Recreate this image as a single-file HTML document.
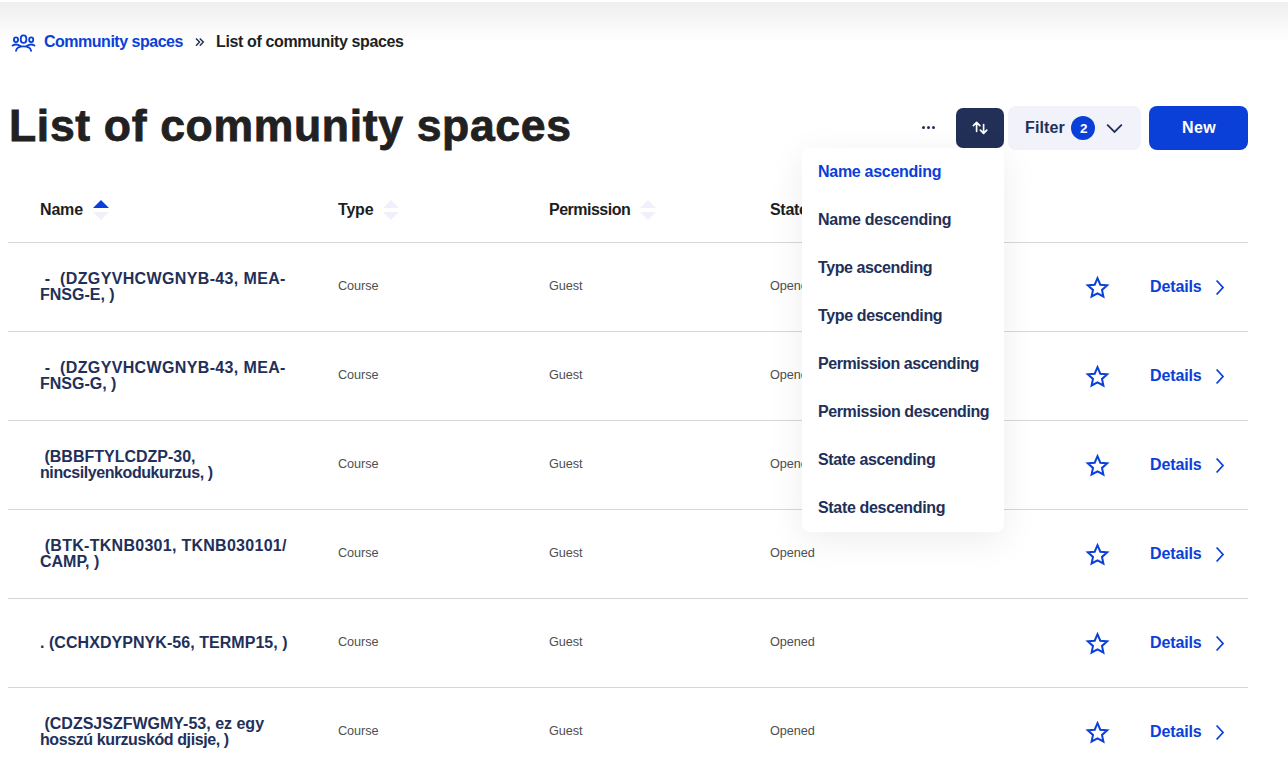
<!DOCTYPE html>
<html>
<head>
<meta charset="utf-8">
<style>
html,body{margin:0;padding:0;background:#fff;width:1288px;height:774px;overflow:hidden;}
body{position:relative;font-family:"Liberation Sans",sans-serif;font-weight:700;}
.a{position:absolute;white-space:nowrap;}
.topshade{position:absolute;left:0;top:2px;width:1288px;height:40px;background:linear-gradient(#efefef,#fff);}
.bc{font-size:16px;line-height:16px;}
.blue{color:#0b40d8;}
.navy{color:#223059;}
h1{margin:0;position:absolute;left:9px;top:98px;font-size:44.5px;letter-spacing:0.67px;-webkit-text-stroke:0.8px #212121;line-height:56px;color:#212121;font-weight:700;white-space:nowrap;}
.btn-sort{position:absolute;left:956px;top:108px;width:48px;height:40px;border-radius:7px;background:#222f56;}
.btn-filter{position:absolute;left:1008px;top:106px;width:133px;height:44px;border-radius:8px;background:#f1f2fa;}
.btn-new{position:absolute;left:1149px;top:106px;width:99px;height:44px;border-radius:8px;background:#0b40d8;}
.badge{position:absolute;left:1071px;top:116px;width:24px;height:24px;border-radius:12px;background:#0b40d8;color:#fff;font-size:13.5px;line-height:25.6px;text-align:center;text-indent:1.6px;}
.th{font-size:16px;line-height:16px;color:#1e1e1e;}
.line{position:absolute;left:8px;width:1240px;height:1px;background:#d6d6d6;}
.nm{font-size:16px;line-height:16px;color:#223059;}
.val{font-size:12.7px;letter-spacing:-0.08px;line-height:14px;color:#4f4f4f;font-weight:400;}
.det{font-size:16px;letter-spacing:-0.12px;line-height:16px;color:#0b40d8;}
.dd{position:absolute;left:802px;top:148px;width:202px;height:384px;background:#fff;border-radius:8px;box-shadow:0 8px 36px rgba(0,0,0,0.075);}
.di{position:absolute;left:16px;font-size:16px;line-height:16px;color:#223059;white-space:nowrap;}
</style>
</head>
<body>
<div class="topshade"></div>

<!-- breadcrumb -->
<svg class="a" style="left:0;top:0" width="40" height="56" viewBox="0 0 40 56">
  <g fill="none" stroke="#0b40d8" stroke-width="1.85" stroke-linecap="round">
    <ellipse cx="16" cy="39.7" rx="2.05" ry="2.4"/>
    <rect x="20.8" y="35.3" width="5.5" height="7.6" rx="2.6" ry="2.9"/>
    <ellipse cx="31.2" cy="39.7" rx="2.05" ry="2.4"/>
    <path d="M12.6 45.5Q16.4 43.3 20.4 46.1"/>
    <path d="M34.5 45.5Q30.7 43.3 26.7 46.1"/>
    <path d="M16 50.8C16.5 47.6 19.5 46.4 23.55 46.4C27.6 46.4 30.6 47.6 31.1 50.8"/>
  </g>
</svg>
<div class="a bc blue" style="left:44px;top:34px;letter-spacing:-0.49px">Community spaces</div>
<svg class="a" style="left:190px;top:32px" width="20" height="18" viewBox="0 0 20 18"><g fill="none" stroke="#223059" stroke-width="1.45"><path d="M6 6.5L9.5 10.1L6 13.7"/><path d="M9.8 6.5L13.3 10.1L9.8 13.7"/></g></svg>
<div class="a bc" style="left:216px;top:34px;color:#1f1f1f;letter-spacing:-0.37px">List of community spaces</div>

<h1>List of community spaces</h1>

<!-- actions -->
<div class="a" style="left:922px;top:126px;width:14px;height:4px">
  <span style="position:absolute;left:0;top:0;width:3px;height:3px;border-radius:2px;background:#223059"></span>
  <span style="position:absolute;left:5px;top:0;width:3px;height:3px;border-radius:2px;background:#223059"></span>
  <span style="position:absolute;left:10px;top:0;width:3px;height:3px;border-radius:2px;background:#223059"></span>
</div>
<div class="btn-sort">
  <svg style="position:absolute;left:0;top:0" width="48" height="40" viewBox="0 0 48 40">
    <g fill="none" stroke="#fff" stroke-width="1.7" stroke-linecap="round" stroke-linejoin="round">
      <path d="M20.6 23.3V14.4M17.4 17.6L20.6 14.4L23.8 17.6"/>
      <path d="M27.6 16.6V25.4M24.4 22.2L27.6 25.4L30.8 22.2"/>
    </g>
  </svg>
</div>
<div class="btn-filter"></div>
<div class="a navy" style="left:1025px;top:120px;font-size:16px;line-height:16px;letter-spacing:0.12px">Filter</div>
<div class="badge">2</div>
<svg class="a" style="left:1106px;top:123px" width="18" height="11" viewBox="0 0 18 11">
  <path d="M1.2 1.6L8.5 8.9L15.8 1.6" fill="none" stroke="#223059" stroke-width="1.8"/>
</svg>
<div class="btn-new"></div>
<div class="a" style="left:1182px;top:120px;font-size:16px;line-height:16px;color:#fff;letter-spacing:0.45px">New</div>

<!-- table header -->
<div class="a th" style="left:40px;top:202px;letter-spacing:-0.17px">Name</div>
<svg class="a" style="left:93px;top:200px" width="16" height="20" viewBox="0 0 16 20">
  <path d="M0 8L8 0L16 8Z" fill="#0b40d8"/><path d="M0 12L8 20L16 12Z" fill="#eff0fa"/>
</svg>
<div class="a th" style="left:338px;top:202px;letter-spacing:-0.2px">Type</div>
<svg class="a" style="left:383px;top:200px" width="16" height="20" viewBox="0 0 16 20">
  <path d="M0 8L8 0L16 8Z" fill="#eff0fa"/><path d="M0 12L8 20L16 12Z" fill="#eff0fa"/>
</svg>
<div class="a th" style="left:549px;top:202px;letter-spacing:-0.5px">Permission</div>
<svg class="a" style="left:640px;top:200px" width="16" height="20" viewBox="0 0 16 20">
  <path d="M0 8L8 0L16 8Z" fill="#eff0fa"/><path d="M0 12L8 20L16 12Z" fill="#eff0fa"/>
</svg>
<div class="a th" style="left:770px;top:202px;letter-spacing:-0.3px">State</div>

<div class="line" style="top:242px"></div>
<div class="line" style="top:331px"></div>
<div class="line" style="top:420px"></div>
<div class="line" style="top:509px"></div>
<div class="line" style="top:598px"></div>
<div class="line" style="top:687px"></div>

<!--ROWS-->
<div class="a nm" style="left:40px;top:271px"><span style="letter-spacing:0.36px">&nbsp;-&nbsp;&nbsp;(DZGYVHCWGNYB-43, MEA-</span><br><span style="letter-spacing:0px">FNSG-E, )</span></div>
<div class="a val" style="left:338px;top:279px">Course</div>
<div class="a val" style="left:549px;top:279px">Guest</div>
<div class="a val" style="left:770px;top:279px">Opened</div>
<svg class="a" style="left:1085px;top:276px" width="25" height="24" viewBox="0 0 25 24"><path d="M12.5 2.2L15.3 8.7L22.2 9.3L17 13.9L18.4 20.5L12.5 17.3L6.6 20.5L8 13.9L2.8 9.3L9.7 8.7Z" fill="none" stroke="#0b40d8" stroke-width="2" stroke-linejoin="miter"/></svg>
<div class="a det" style="left:1150px;top:279px">Details</div>
<svg class="a" style="left:1214px;top:279px" width="12" height="17" viewBox="0 0 12 17"><path d="M2.6 1.5L9 8.5L2.6 15.5" fill="none" stroke="#0b40d8" stroke-width="1.75"/></svg>
<div class="a nm" style="left:40px;top:360px"><span style="letter-spacing:0.36px">&nbsp;-&nbsp;&nbsp;(DZGYVHCWGNYB-43, MEA-</span><br><span style="letter-spacing:0px">FNSG-G, )</span></div>
<div class="a val" style="left:338px;top:368px">Course</div>
<div class="a val" style="left:549px;top:368px">Guest</div>
<div class="a val" style="left:770px;top:368px">Opened</div>
<svg class="a" style="left:1085px;top:365px" width="25" height="24" viewBox="0 0 25 24"><path d="M12.5 2.2L15.3 8.7L22.2 9.3L17 13.9L18.4 20.5L12.5 17.3L6.6 20.5L8 13.9L2.8 9.3L9.7 8.7Z" fill="none" stroke="#0b40d8" stroke-width="2" stroke-linejoin="miter"/></svg>
<div class="a det" style="left:1150px;top:368px">Details</div>
<svg class="a" style="left:1214px;top:368px" width="12" height="17" viewBox="0 0 12 17"><path d="M2.6 1.5L9 8.5L2.6 15.5" fill="none" stroke="#0b40d8" stroke-width="1.75"/></svg>
<div class="a nm" style="left:40px;top:449px"><span style="letter-spacing:0px">&nbsp;(BBBFTYLCDZP-30,</span><br><span style="letter-spacing:-0.42px">nincsilyenkodukurzus, )</span></div>
<div class="a val" style="left:338px;top:457px">Course</div>
<div class="a val" style="left:549px;top:457px">Guest</div>
<div class="a val" style="left:770px;top:457px">Opened</div>
<svg class="a" style="left:1085px;top:454px" width="25" height="24" viewBox="0 0 25 24"><path d="M12.5 2.2L15.3 8.7L22.2 9.3L17 13.9L18.4 20.5L12.5 17.3L6.6 20.5L8 13.9L2.8 9.3L9.7 8.7Z" fill="none" stroke="#0b40d8" stroke-width="2" stroke-linejoin="miter"/></svg>
<div class="a det" style="left:1150px;top:457px">Details</div>
<svg class="a" style="left:1214px;top:457px" width="12" height="17" viewBox="0 0 12 17"><path d="M2.6 1.5L9 8.5L2.6 15.5" fill="none" stroke="#0b40d8" stroke-width="1.75"/></svg>
<div class="a nm" style="left:40px;top:538px"><span style="letter-spacing:0.28px">&nbsp;(BTK-TKNB0301, TKNB030101/</span><br><span style="letter-spacing:0px">CAMP, )</span></div>
<div class="a val" style="left:338px;top:546px">Course</div>
<div class="a val" style="left:549px;top:546px">Guest</div>
<div class="a val" style="left:770px;top:546px">Opened</div>
<svg class="a" style="left:1085px;top:543px" width="25" height="24" viewBox="0 0 25 24"><path d="M12.5 2.2L15.3 8.7L22.2 9.3L17 13.9L18.4 20.5L12.5 17.3L6.6 20.5L8 13.9L2.8 9.3L9.7 8.7Z" fill="none" stroke="#0b40d8" stroke-width="2" stroke-linejoin="miter"/></svg>
<div class="a det" style="left:1150px;top:546px">Details</div>
<svg class="a" style="left:1214px;top:546px" width="12" height="17" viewBox="0 0 12 17"><path d="M2.6 1.5L9 8.5L2.6 15.5" fill="none" stroke="#0b40d8" stroke-width="1.75"/></svg>
<div class="a nm" style="left:40px;top:635px;letter-spacing:0.05px">. (CCHXDYPNYK-56, TERMP15, )</div>
<div class="a val" style="left:338px;top:635px">Course</div>
<div class="a val" style="left:549px;top:635px">Guest</div>
<div class="a val" style="left:770px;top:635px">Opened</div>
<svg class="a" style="left:1085px;top:632px" width="25" height="24" viewBox="0 0 25 24"><path d="M12.5 2.2L15.3 8.7L22.2 9.3L17 13.9L18.4 20.5L12.5 17.3L6.6 20.5L8 13.9L2.8 9.3L9.7 8.7Z" fill="none" stroke="#0b40d8" stroke-width="2" stroke-linejoin="miter"/></svg>
<div class="a det" style="left:1150px;top:635px">Details</div>
<svg class="a" style="left:1214px;top:635px" width="12" height="17" viewBox="0 0 12 17"><path d="M2.6 1.5L9 8.5L2.6 15.5" fill="none" stroke="#0b40d8" stroke-width="1.75"/></svg>
<div class="a nm" style="left:40px;top:716px"><span style="letter-spacing:0px">&nbsp;(CDZSJSZFWGMY-53, ez egy</span><br><span style="letter-spacing:-0.4px">hossz&uacute; kurzusk&oacute;d djisje, )</span></div>
<div class="a val" style="left:338px;top:724px">Course</div>
<div class="a val" style="left:549px;top:724px">Guest</div>
<div class="a val" style="left:770px;top:724px">Opened</div>
<svg class="a" style="left:1085px;top:721px" width="25" height="24" viewBox="0 0 25 24"><path d="M12.5 2.2L15.3 8.7L22.2 9.3L17 13.9L18.4 20.5L12.5 17.3L6.6 20.5L8 13.9L2.8 9.3L9.7 8.7Z" fill="none" stroke="#0b40d8" stroke-width="2" stroke-linejoin="miter"/></svg>
<div class="a det" style="left:1150px;top:724px">Details</div>
<svg class="a" style="left:1214px;top:724px" width="12" height="17" viewBox="0 0 12 17"><path d="M2.6 1.5L9 8.5L2.6 15.5" fill="none" stroke="#0b40d8" stroke-width="1.75"/></svg>
<!--/ROWS-->

<!-- dropdown -->
<div class="dd">
  <div class="di" style="top:16px;color:#0b40d8;letter-spacing:-0.28px">Name ascending</div>
  <div class="di" style="top:64px;letter-spacing:-0.25px">Name descending</div>
  <div class="di" style="top:112px;letter-spacing:-0.4px">Type ascending</div>
  <div class="di" style="top:160px;letter-spacing:-0.35px">Type descending</div>
  <div class="di" style="top:208px;letter-spacing:-0.45px">Permission ascending</div>
  <div class="di" style="top:256px;letter-spacing:-0.4px">Permission descending</div>
  <div class="di" style="top:304px;letter-spacing:-0.36px">State ascending</div>
  <div class="di" style="top:352px;letter-spacing:-0.33px">State descending</div>
</div>
</body>
</html>
